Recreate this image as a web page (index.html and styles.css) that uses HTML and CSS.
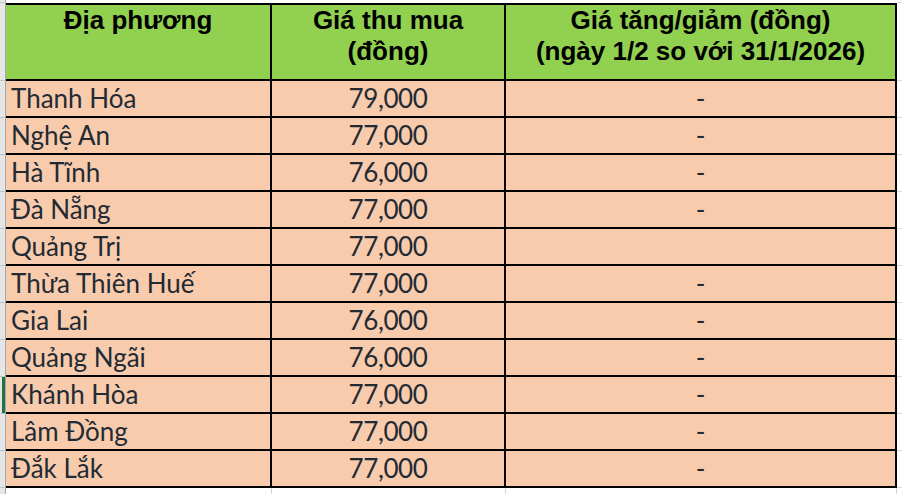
FILE: index.html
```html
<!DOCTYPE html>
<html lang="vi">
<head>
<meta charset="utf-8">
<title>Giá thu mua</title>
<link rel="stylesheet" href="styles.css">
</head>
<body>
<div class="sheet">
  <div class="row row-top">
    <div class="gut"></div><div class="pad"></div><div class="pad"></div><div class="pad"></div><div class="fill"></div>
  </div>
  <div class="row row-head">
    <div class="gut"></div>
    <div class="hcell">Địa phương</div>
    <div class="hcell">Giá thu mua<br>(đồng)</div>
    <div class="hcell">Giá tăng/giảm (đồng)<br>(ngày 1/2 so với 31/1/2026)</div>
    <div class="fill"></div>
  </div>
  <div class="row"><div class="gut"></div><div class="cell name">Thanh Hóa</div><div class="cell num">79,000</div><div class="cell chg">-</div><div class="fill"></div></div>
  <div class="row"><div class="gut"></div><div class="cell name">Nghệ An</div><div class="cell num">77,000</div><div class="cell chg">-</div><div class="fill"></div></div>
  <div class="row"><div class="gut"></div><div class="cell name">Hà Tĩnh</div><div class="cell num">76,000</div><div class="cell chg">-</div><div class="fill"></div></div>
  <div class="row"><div class="gut"></div><div class="cell name">Đà Nẵng</div><div class="cell num">77,000</div><div class="cell chg">-</div><div class="fill"></div></div>
  <div class="row"><div class="gut"></div><div class="cell name">Quảng Trị</div><div class="cell num">77,000</div><div class="cell chg"></div><div class="fill"></div></div>
  <div class="row"><div class="gut"></div><div class="cell name">Thừa Thiên Huế</div><div class="cell num">77,000</div><div class="cell chg">-</div><div class="fill"></div></div>
  <div class="row"><div class="gut"></div><div class="cell name">Gia Lai</div><div class="cell num">76,000</div><div class="cell chg">-</div><div class="fill"></div></div>
  <div class="row"><div class="gut"></div><div class="cell name">Quảng Ngãi</div><div class="cell num">76,000</div><div class="cell chg">-</div><div class="fill"></div></div>
  <div class="row"><div class="gut gut-active"></div><div class="cell name">Khánh Hòa</div><div class="cell num">77,000</div><div class="cell chg">-</div><div class="fill"></div></div>
  <div class="row"><div class="gut"></div><div class="cell name">Lâm Đồng</div><div class="cell num">77,000</div><div class="cell chg">-</div><div class="fill"></div></div>
  <div class="row"><div class="gut"></div><div class="cell name">Đắk Lắk</div><div class="cell num">77,000</div><div class="cell chg">-</div><div class="fill"></div></div>
  <div class="row row-bottom">
    <div class="gut"></div><div class="pad"></div><div class="pad"></div><div class="pad"></div><div class="fill"></div>
  </div>
</div>
</body>
</html>
```
FILE: styles.css
```css
html, body {
  margin: 0;
  padding: 0;
  background: #ffffff;
}
body {
  width: 902px;
  height: 494px;
  overflow: hidden;
}
.sheet {
  display: flex;
  flex-direction: column;
  width: 902px;
}
.row {
  display: grid;
  grid-template-columns: 6px 266px 234px 391px 5px;
  height: 37px;
}
.row > div {
  box-sizing: border-box;
}
.row-top {
  height: 3px;
}
.row-head {
  height: 78px;
}
.row-bottom {
  height: 6px;
}
.gut {
  background: #e6e6e6;
  border-right: 1px solid #a6a6a6;
  border-bottom: 1px solid #c4c4c4;
}
.gut-active {
  box-shadow: inset -3px 0 0 #217346;
}
.fill {
  border-bottom: 1px solid #d9d9d9;
}
.row-bottom .fill,
.row-bottom .gut {
  border-bottom: none;
}
.pad {
  background: #ffffff;
}
.row-bottom .pad {
  border-right: 1px solid #d4d4d4;
}
.hcell {
  background: #92d050;
  border-top: 2px solid #000000;
  border-right: 2px solid #000000;
  border-bottom: 2px solid #000000;
  font-family: "Liberation Sans", Arial, sans-serif;
  font-weight: bold;
  font-size: 26px;
  line-height: 31px;
  color: #000000;
  text-align: center;
  padding: 0;
}
.cell {
  background: #f8cbad;
  border-right: 2px solid #000000;
  border-bottom: 2px solid #000000;
  font-family: Lato, "Noto Sans", sans-serif;
  font-size: 26px;
  line-height: 35px;
  color: #222a33;
  white-space: nowrap;
}
.name {
  text-align: left;
  padding-left: 5px;
}
.num {
  text-align: center;
  letter-spacing: -0.4px;
}
.chg {
  text-align: center;
}
```
